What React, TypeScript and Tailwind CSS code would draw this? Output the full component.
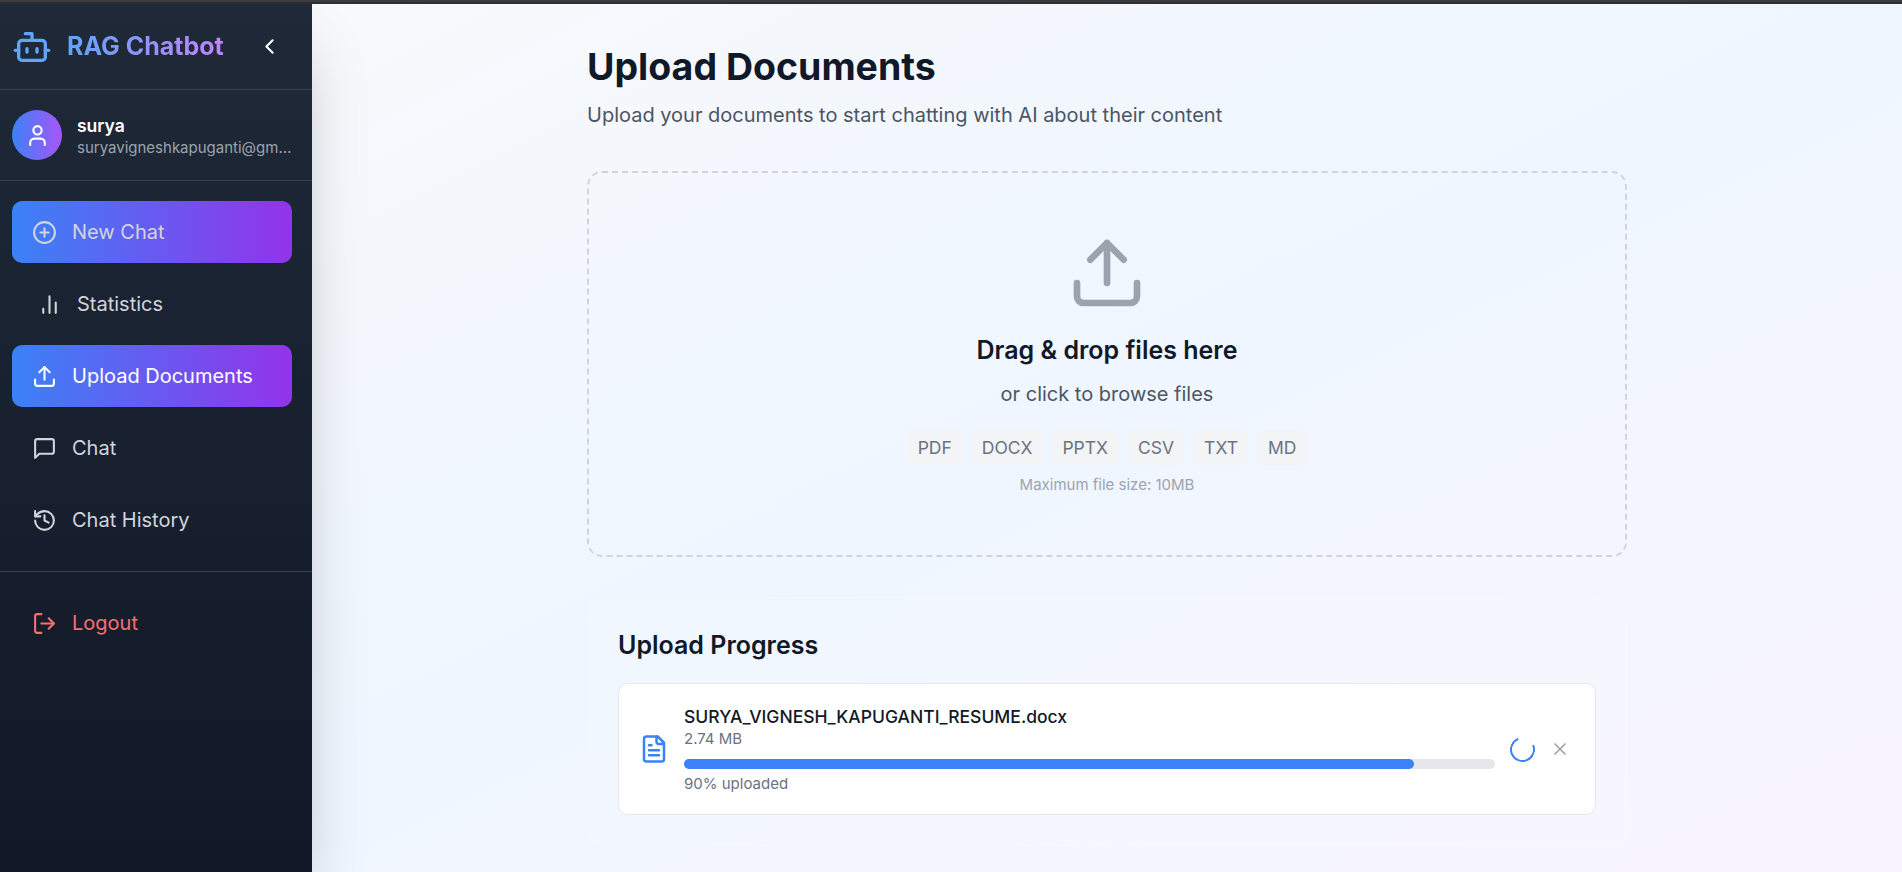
import type { ReactNode } from "react";
import { Bot, ChevronLeft, User, CirclePlus, Upload, History, LogOut, X } from "lucide-react";

function Icon({ className, children }: { className: string; children: ReactNode }) {
  return (
    <svg viewBox="0 0 24 24" fill="none" stroke="currentColor" strokeWidth="2" strokeLinecap="round" strokeLinejoin="round" className={className}>
      {children}
    </svg>
  );
}

function StatsIcon() {
  return (
    <Icon className="size-[25px] shrink-0">
      <path d="M18 20V10M12 20V4M6 20v-4" />
    </Icon>
  );
}

function MessageIcon() {
  return (
    <Icon className="size-[25px] shrink-0">
      <path d="M21 15a2 2 0 0 1-2 2H7l-4 4V5a2 2 0 0 1 2-2h14a2 2 0 0 1 2 2z" />
    </Icon>
  );
}

function FileIcon() {
  return (
    <Icon className="size-[30px] shrink-0 text-[#3b82f6]">
      <path d="M15 2H6a2 2 0 0 0-2 2v16a2 2 0 0 0 2 2h12a2 2 0 0 0 2-2V7Z" />
      <path d="M14 2v4a2 2 0 0 0 2 2h4" />
      <path d="M10 9H8M16 13H8M16 17H8" />
    </Icon>
  );
}

const base = "flex h-[62px] w-full items-center gap-[15px] rounded-[10px] text-left text-[20px] leading-[30px]";
const active = "bg-linear-to-r/srgb from-[#3b82f6] to-[#9333ea]";

function Sidebar() {
  return (
    <aside className="relative z-10 flex h-[868px] w-[312px] shrink-0 flex-col bg-linear-to-b/srgb from-[#1f2937] to-[#111827] shadow-[0_31px_62px_-15px_rgba(0,0,0,0.25)]">
      <div className="flex h-[86px] items-center border-b border-[#374151] pl-3">
        <Bot className="size-10 text-[#60a5fa]" />
        <h1 className="ml-[15px] bg-linear-to-r/srgb from-[#60a5fa] to-[#c084fc] bg-clip-text text-[25px] leading-[35px] font-bold text-transparent">RAG Chatbot</h1>
        <button className="mr-[30px] ml-auto text-white">
          <ChevronLeft className="size-[25px]" />
        </button>
      </div>
      <div className="flex h-[91px] items-center gap-[15px] border-b border-[#374151] px-3">
        <div className="flex size-[50px] shrink-0 items-center justify-center rounded-full bg-linear-to-r/srgb from-[#3b82f6] to-[#a855f7] text-white">
          <User className="size-[25px]" />
        </div>
        <div className="min-w-0 flex-1">
          <p className="text-[17.5px] leading-[25px] font-semibold text-white">surya</p>
          <p className="text-[15px] leading-5 whitespace-nowrap text-[#9ca3af]">suryavigneshkapuganti@gm…</p>
        </div>
      </div>
      <nav className="flex flex-col gap-2.5 border-b border-[#374151] pt-5 pr-5 pb-5 pl-3 text-[#d1d5db]">
        <button className={`${base} ${active} px-5`}>
          <CirclePlus className="size-[25px] shrink-0" />
          New Chat
        </button>
        <button className={`${base} px-[25px]`}>
          <StatsIcon />
          Statistics
        </button>
        <button className={`${base} ${active} px-5 text-white`}>
          <Upload className="size-[25px] shrink-0" />
          Upload Documents
        </button>
        <button className={`${base} px-5`}>
          <MessageIcon />
          Chat
        </button>
        <button className={`${base} px-5`}>
          <History className="size-[25px] shrink-0" />
          Chat History
        </button>
      </nav>
      <div className="pt-5 pr-5 pl-3 text-[#f87171]">
        <button className={`${base} px-5`}>
          <LogOut className="size-[25px] shrink-0" />
          Logout
        </button>
      </div>
    </aside>
  );
}

const formats = ["PDF", "DOCX", "PPTX", "CSV", "TXT", "MD"];

function DropZone() {
  return (
    <section className="flex h-[386px] flex-col items-center rounded-[15px] border-2 border-dashed border-[#d1d5db] pt-[60px]">
      <Upload className="size-20 text-[#9ca3af]" />
      <h3 className="mt-5 text-[25px] leading-[35px] font-semibold text-[#111827]">Drag &amp; drop files here</h3>
      <p className="mt-[11px] text-[20px] leading-[30px] text-[#4b5563]">or click to browse files</p>
      <div className="mt-[21px] flex gap-2.5 text-[17.5px] leading-[25px] text-[#6b7280]">
        {formats.map((f) => (
          <span key={f} className="rounded-[5px] bg-[#f3f4f6] px-2.5 py-[5px]">{f}</span>
        ))}
      </div>
      <p className="mt-2.5 text-[15px] leading-5 text-[#9ca3af]">Maximum file size: 10MB</p>
    </section>
  );
}

function UploadProgress({ percent }: { percent: number }) {
  return (
    <section className="mt-10 rounded-[15px] border border-white/20 bg-white/10 p-[30px]">
      <h3 className="text-[25px] leading-[35px] font-semibold text-[#111827]">Upload Progress</h3>
      <div className="mt-5 flex items-center rounded-[10px] border border-[#e5e7eb] bg-white p-5">
        <FileIcon />
        <div className="mx-[15px] min-w-0 flex-1">
          <p className="text-[17.5px] leading-[25px] font-medium text-[#111827]">SURYA_VIGNESH_KAPUGANTI_RESUME.docx</p>
          <p className="text-[15px] leading-5 text-[#6b7280]">2.74 MB</p>
          <div className="mt-2.5 h-2.5 rounded-full bg-[#e5e7eb]">
            <div className="h-full rounded-full bg-[#3b82f6]" style={{ width: `${percent}%` }} />
          </div>
          <p className="mt-[5px] text-[15px] leading-5 text-[#6b7280]">{percent}% uploaded</p>
        </div>
        <div className="size-[25px] rotate-[23deg] rounded-full border-2 border-[#3b82f6] border-t-transparent" />
        <button className="ml-2.5 p-[5px] text-[#9ca3af]">
          <X className="size-5" />
        </button>
      </div>
    </section>
  );
}

export default function App() {
  return (
    <div className="h-[872px] w-full overflow-hidden font-['Inter',sans-serif]">
      <div className="flex h-[926px] w-full flex-col bg-linear-to-br/srgb from-[#f9fafb] via-[#eff6ff] to-[#faf5ff]">
        <div className="relative z-20 h-1 shrink-0 border-b-2 border-[#2e2f33] bg-[#3c3b3e]" />
        <div className="flex min-h-0 flex-1">
          <Sidebar />
          <main className="flex-1 pt-10">
            <div className="mx-auto w-[1040px]">
              <h1 className="text-[37.5px] leading-[45px] font-bold text-[#111827]">Upload Documents</h1>
              <p className="mt-[11px] mb-[41px] text-[20px] leading-[30px] text-[#4b5563]">Upload your documents to start chatting with AI about their content</p>
              <DropZone />
              <UploadProgress percent={90} />
            </div>
          </main>
        </div>
      </div>
    </div>
  );
}
